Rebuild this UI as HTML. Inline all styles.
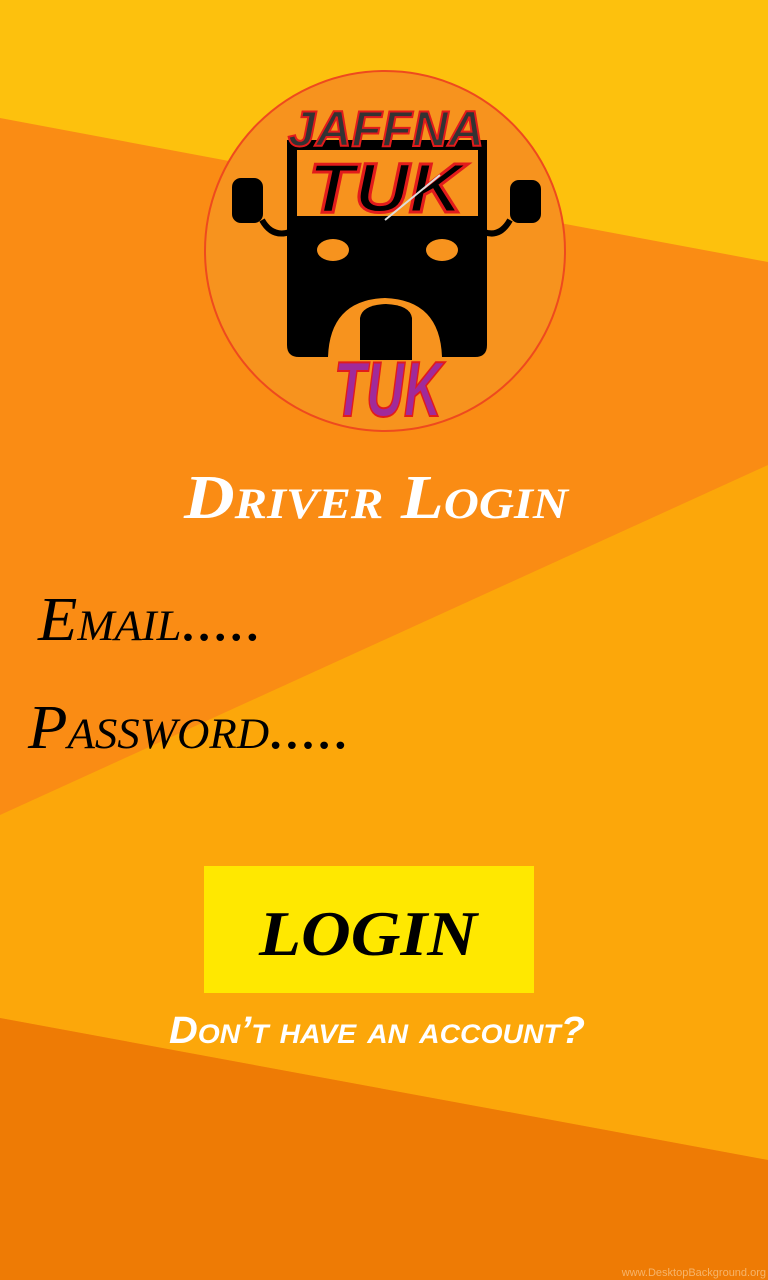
<!DOCTYPE html>
<html><head><meta charset="utf-8"><style>
html,body{margin:0;padding:0;width:768px;height:1280px;overflow:hidden}
svg{display:block}
</style></head><body>
<svg width="768" height="1280" viewBox="0 0 768 1280" xmlns="http://www.w3.org/2000/svg">
<rect width="768" height="1280" fill="#FA8C14"/>
<polygon points="0,0 768,0 768,262 0,118" fill="#FDC10D"/>
<polygon points="0,815 768,465 768,1160 0,1018" fill="#FCA70A"/>
<polygon points="0,1018 768,1160 768,1280 0,1280" fill="#EE7B05"/>
<!-- logo -->
<circle cx="385" cy="251" r="180" fill="#F7931E" stroke="#EE4A1E" stroke-width="2"/>
<path d="M262,220 Q272,238 290,232" fill="none" stroke="#000" stroke-width="6"/>
<path d="M510,220 Q500,238 484,232" fill="none" stroke="#000" stroke-width="6"/>
<rect x="232" y="178" width="31" height="45" rx="9" fill="#000"/>
<rect x="510" y="180" width="31" height="43" rx="9" fill="#000"/>
<path d="M287,140 H487 V345 Q487,357 475,357 H442 Q440,300 385,298 Q330,300 328,357 H299 Q287,357 287,345 Z" fill="#000"/>
<rect x="297" y="150" width="181" height="66" fill="#F7931E"/>
<ellipse cx="333" cy="250" rx="16" ry="11" fill="#F7931E"/>
<ellipse cx="442" cy="250" rx="16" ry="11" fill="#F7931E"/>
<path d="M360,360 V318 Q362,305 386,304 Q410,305 412,318 V360 Z" fill="#000"/>
<text x="386" y="146" text-anchor="middle" font-family="Liberation Sans, sans-serif" font-weight="bold" font-style="italic" font-size="50" fill="#333" stroke="#E21B1B" stroke-width="2" textLength="196" lengthAdjust="spacingAndGlyphs">JAFFNA</text>
<text x="386" y="212" text-anchor="middle" font-family="Liberation Sans, sans-serif" font-weight="bold" font-style="italic" font-size="70" fill="#000" stroke="#E21B1B" stroke-width="3" textLength="155" lengthAdjust="spacingAndGlyphs">TUK</text>
<line x1="385" y1="220" x2="440" y2="175" stroke="#ddd" stroke-width="2"/>
<text x="388" y="416" text-anchor="middle" font-family="Liberation Sans, sans-serif" font-weight="bold" font-style="italic" font-size="78" fill="#A02A9A" stroke="#E21B1B" stroke-width="2" textLength="108" lengthAdjust="spacingAndGlyphs">TUK</text>
<!-- title -->
<text x="376" y="518" text-anchor="middle" font-family="Liberation Serif, serif" font-weight="bold" font-style="italic" font-size="62" fill="#fff" style="font-variant:small-caps" textLength="384" lengthAdjust="spacingAndGlyphs">Driver Login</text>
<text x="38" y="640" font-family="Liberation Serif, serif" font-style="italic" font-size="62" fill="#000" style="font-variant:small-caps" textLength="224" lengthAdjust="spacingAndGlyphs">Email.....</text>
<text x="28" y="748" font-family="Liberation Serif, serif" font-style="italic" font-size="62" fill="#000" style="font-variant:small-caps" textLength="322" lengthAdjust="spacingAndGlyphs">Password.....</text>
<rect x="204" y="866" width="330" height="127" fill="#FFE800"/>
<text x="368" y="955" text-anchor="middle" font-family="Liberation Serif, serif" font-weight="bold" font-style="italic" font-size="64" fill="#000" textLength="218" lengthAdjust="spacingAndGlyphs">LOGIN</text>
<text x="377" y="1043" text-anchor="middle" font-family="Liberation Sans, sans-serif" font-weight="bold" font-style="italic" font-size="38" fill="#fff" style="font-variant:small-caps" textLength="416" lengthAdjust="spacingAndGlyphs">Don’t have an account?</text>
<text x="766" y="1276" text-anchor="end" font-family="Liberation Sans, sans-serif" font-size="11" fill="#F6B46A">www.DesktopBackground.org</text>
</svg>
</body></html>
